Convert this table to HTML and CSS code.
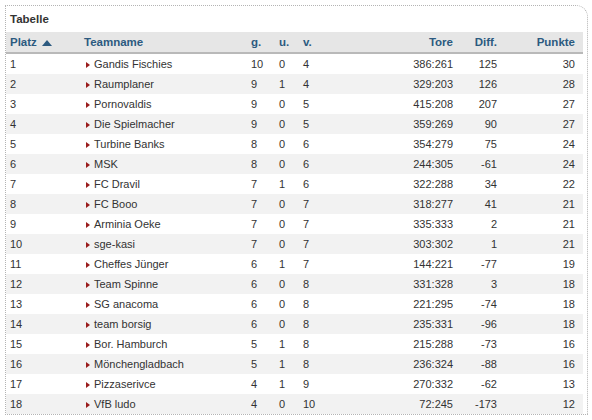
FILE: index.html
```html
<!DOCTYPE html>
<html>
<head>
<meta charset="utf-8">
<link rel="stylesheet" href="styles.css">
</head>
<body>
<div class="box">
  <div class="title">Tabelle</div>
  <table class="tbl">
    <colgroup>
      <col class="c-platz"><col class="c-team"><col class="c-g"><col class="c-u"><col class="c-v"><col class="c-tore"><col class="c-diff"><col class="c-pkt">
    </colgroup>
    <thead>
      <tr>
        <th class="l p1">Platz <svg class="up" width="10" height="6" viewBox="0 0 10 6"><polygon points="0,6 10,6 5,0" fill="#2c5a80"/></svg></th>
        <th class="l">Teamname</th>
        <th class="l">g.</th>
        <th class="l">u.</th>
        <th class="l">v.</th>
        <th class="r">Tore</th>
        <th class="r">Diff.</th>
        <th class="r pk">Punkte</th>
      </tr>
    </thead>
    <tbody id="rows"></tbody>
  </table>
</div>
<script>
var d=[
[1,"Gandis Fischies",10,0,4,"386:261",125,30],
[2,"Raumplaner",9,1,4,"329:203",126,28],
[3,"Pornovaldis",9,0,5,"415:208",207,27],
[4,"Die Spielmacher",9,0,5,"359:269",90,27],
[5,"Turbine Banks",8,0,6,"354:279",75,24],
[6,"MSK",8,0,6,"244:305",-61,24],
[7,"FC Dravil",7,1,6,"322:288",34,22],
[8,"FC Booo",7,0,7,"318:277",41,21],
[9,"Arminia Oeke",7,0,7,"335:333",2,21],
[10,"sge-kasi",7,0,7,"303:302",1,21],
[11,"Cheffes Jünger",6,1,7,"144:221",-77,19],
[12,"Team Spinne",6,0,8,"331:328",3,18],
[13,"SG anacoma",6,0,8,"221:295",-74,18],
[14,"team borsig",6,0,8,"235:331",-96,18],
[15,"Bor. Hamburch",5,1,8,"215:288",-73,16],
[16,"Mönchengladbach",5,1,8,"236:324",-88,16],
[17,"Pizzaserivce",4,1,9,"270:332",-62,13],
[18,"VfB ludo",4,0,10,"72:245",-173,12]];
var h="";
d.forEach(function(r){
h+='<tr><td class="l p1">'+r[0]+'</td><td class="l"><svg class="arr" width="4" height="6" viewBox="0 0 4 6"><polygon points="0,0 4,3 0,6" fill="#9a1c1c"/></svg>'+r[1]+'</td><td class="l">'+r[2]+'</td><td class="l">'+r[3]+'</td><td class="l">'+r[4]+'</td><td class="r">'+r[5]+'</td><td class="r">'+r[6]+'</td><td class="r pk">'+r[7]+'</td></tr>';
});
document.getElementById("rows").innerHTML=h;
</script>
</body>
</html>
```
FILE: styles.css
```css
html, body {
  margin: 0;
  padding: 0;
  background: #fff;
}
body {
  font-family: "Liberation Sans", Arial, sans-serif;
  font-size: 11px;
  color: #333;
}
.box {
  margin: 5px 0 0 5px;
  width: 583px;
  height: 410px;
  box-sizing: border-box;
  border: 1px dotted #b4b4b4;
  border-top-right-radius: 12px;
  overflow: hidden;
}
.title {
  height: 26px;
  line-height: 26px;
  padding-left: 4px;
  font-weight: bold;
  font-size: 11.5px;
  color: #333;
}
.tbl {
  width: 577px;
  border-collapse: collapse;
  table-layout: fixed;
}
.c-platz { width: 74px; }
.c-team { width: 167px; }
.c-g { width: 28px; }
.c-u { width: 24px; }
.c-v { width: 104px; }
.c-tore { width: 54px; }
.c-diff { width: 44px; }
.c-pkt { width: 82px; }
.tbl th {
  background: #e6e6e6;
  border-bottom: 2px solid #b9b9b9;
  height: 20px;
  line-height: 20px;
  padding: 0 4px;
  font-size: 11.5px;
  font-weight: bold;
  color: #2c5a80;
  white-space: nowrap;
}
.tbl td {
  height: 20px;
  line-height: 20px;
  padding: 0 4px;
  color: #333;
  white-space: nowrap;
}
.tbl tbody tr:nth-child(even) td {
  background: #f2f2f2;
}
.l { text-align: left; }
.r { text-align: right; }
.tbl .pk { padding-right: 8px; }
.up {
  margin-left: 2px;
  vertical-align: 0px;
}
.arr {
  margin: 0 4px 0 2px;
  vertical-align: 0px;
}
```
